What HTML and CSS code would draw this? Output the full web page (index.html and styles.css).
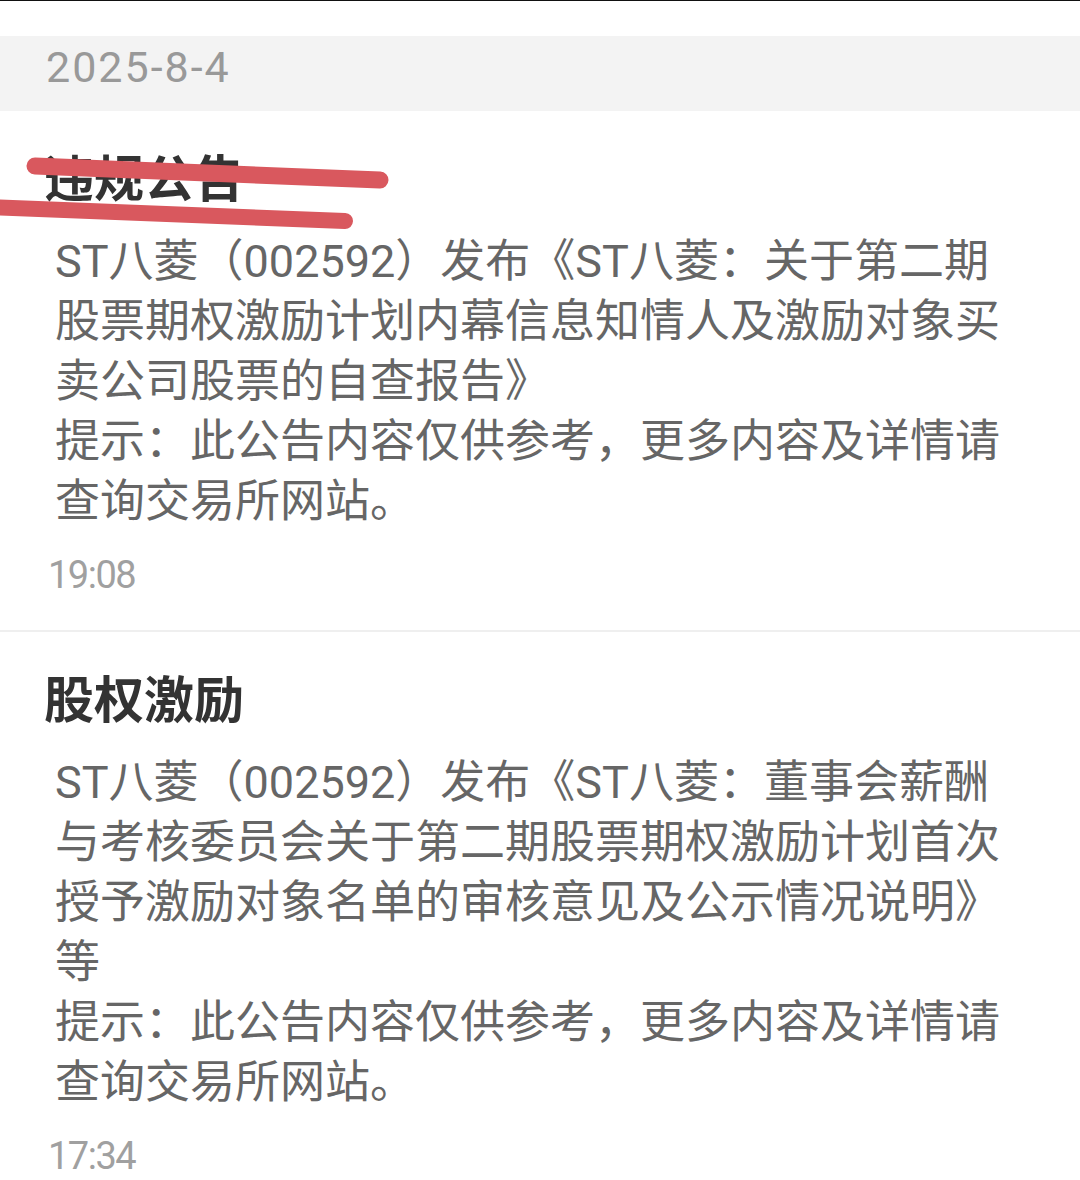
FILE: index.html
```html
<!DOCTYPE html>
<html lang="zh-CN">
<head>
<meta charset="utf-8">
<link rel="stylesheet" href="styles.css">
</head>
<body>
<div class="topline"></div>
<div class="date-bar">2025-8-4</div>
<section class="item">
  <h2 class="title">违规公告</h2>
  <svg class="strikes" width="400" height="240" viewBox="0 0 400 240" aria-hidden="true">
    <line x1="35" y1="161" x2="380" y2="175" stroke="#d9585e" stroke-width="17" stroke-linecap="round"/>
    <line x1="-10" y1="202" x2="345" y2="216" stroke="#d9585e" stroke-width="16" stroke-linecap="round"/>
  </svg>
  <p class="body">ST八菱（002592）发布《ST八菱：关于第二期股票期权激励计划内幕信息知情人及激励对象买卖公司股票的自查报告》<br>提示：此公告内容仅供参考，更多内容及详情请查询交易所网站。</p>
  <div class="time">19:08</div>
</section>
<section class="item">
  <h2 class="title">股权激励</h2>
  <p class="body">ST八菱（002592）发布《ST八菱：董事会薪酬与考核委员会关于第二期股票期权激励计划首次授予激励对象名单的审核意见及公示情况说明》等<br>提示：此公告内容仅供参考，更多内容及详情请查询交易所网站。</p>
  <div class="time">17:34</div>
</section>
</body>
</html>
```
FILE: styles.css
```css
html, body {
  margin: 0;
  padding: 0;
  background: #ffffff;
}
body {
  width: 1080px;
  height: 1180px;
  overflow: hidden;
  font-family: "Noto Sans CJK SC", "Noto Sans", sans-serif;
  position: relative;
}
.topline {
  height: 1px;
  background: #111;
  margin-bottom: 35px;
}
.date-bar {
  height: 75px;
  background: #f3f3f3;
  color: #999999;
  font-family: Roboto, "Noto Sans", sans-serif;
  font-size: 43px;
  letter-spacing: 2px;
  line-height: 62px;
  padding-left: 46px;
  box-sizing: border-box;
}
.item {
  position: relative;
  padding: 29px 0 30px 0;
  border-bottom: 2px solid #efefef;
}
.title {
  margin: 0;
  padding-left: 44px;
  font-size: 50px;
  line-height: 70px;
  font-weight: 700;
  color: #333333;
}
.strikes {
  position: absolute;
  left: 0;
  top: 0;
  margin-top: -106px;
  overflow: visible;
}
.body {
  margin: 22px 0 0 0;
  padding-left: 55px;
  width: 948px;
  font-family: Roboto, "Noto Sans CJK SC", sans-serif;
  font-size: 45px;
  line-height: 60px;
  color: #666666;
  word-break: break-all;
}
.time {
  margin-top: 18px;
  padding-left: 48px;
  font-family: Roboto, "Noto Sans", sans-serif;
  font-size: 38px;
  letter-spacing: -1.5px;
  line-height: 50px;
  color: #a0a0a0;
}
```
